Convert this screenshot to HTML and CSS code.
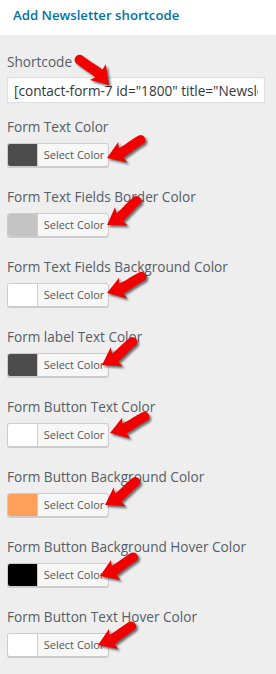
FILE: index.html
```html
<!DOCTYPE html>
<html lang="en">
<head>
    <meta charset="UTF-8">
    <title>Add Newsletter shortcode</title>
    <link rel="stylesheet" href="styles.css">
</head>
<body>
    <div class="panel-head">Add Newsletter shortcode</div>
    <div class="panel">
        <div class="field">
            <label class="label">Shortcode</label>
            <input class="text-input" type="text" value='[contact-form-7 id="1800" title="Newsletter"]' readonly>
            <svg class="arrow arrow-down" width="60" height="50" viewBox="0 0 60 50"><g transform="translate(44 40) rotate(-132) scale(1.1)"><path d="M0 0 L15 -10 L13.5 -4.5 C22 -6 30 -8.5 35 -9 A4.5 4.5 0 0 1 37 -0.5 C29 1 21 3.5 14.5 5 L16 10.5 Z"/></g></svg>
        </div>

        <div class="field">
            <label class="label">Form Text Color</label>
            <button class="color-btn"><span class="swatch" style="background:#4c4c4c"></span><span class="btn-text">Select Color</span></button>
            <svg class="arrow" width="60" height="50" viewBox="0 0 60 50"><g transform="translate(4 30) rotate(-21) scale(1.08)"><path d="M0 0 L15 -10 L13.5 -4.5 C22 -6 30 -8.5 35 -9 A4.5 4.5 0 0 1 37 -0.5 C29 1 21 3.5 14.5 5 L16 10.5 Z"/></g></svg>
        </div>

        <div class="field">
            <label class="label">Form Text Fields Border Color</label>
            <button class="color-btn"><span class="swatch" style="background:#c4c4c4"></span><span class="btn-text">Select Color</span></button>
            <svg class="arrow" width="60" height="50" viewBox="0 0 60 50"><g transform="translate(4 30) rotate(-32) scale(1.08)"><path d="M0 0 L15 -10 L13.5 -4.5 C22 -6 30 -8.5 35 -9 A4.5 4.5 0 0 1 37 -0.5 C29 1 21 3.5 14.5 5 L16 10.5 Z"/></g></svg>
        </div>

        <div class="field">
            <label class="label">Form Text Fields Background Color</label>
            <button class="color-btn"><span class="swatch" style="background:#ffffff"></span><span class="btn-text">Select Color</span></button>
            <svg class="arrow" width="60" height="50" viewBox="0 0 60 50"><g transform="translate(4 30) rotate(-18) scale(1.08)"><path d="M0 0 L15 -10 L13.5 -4.5 C22 -6 30 -8.5 35 -9 A4.5 4.5 0 0 1 37 -0.5 C29 1 21 3.5 14.5 5 L16 10.5 Z"/></g></svg>
        </div>

        <div class="field">
            <label class="label">Form label Text Color</label>
            <button class="color-btn"><span class="swatch" style="background:#4c4c4c"></span><span class="btn-text">Select Color</span></button>
            <svg class="arrow" width="60" height="50" viewBox="0 0 60 50"><g transform="translate(4 30) rotate(-30) scale(1.08)"><path d="M0 0 L15 -10 L13.5 -4.5 C22 -6 30 -8.5 35 -9 A4.5 4.5 0 0 1 37 -0.5 C29 1 21 3.5 14.5 5 L16 10.5 Z"/></g></svg>
        </div>

        <div class="field">
            <label class="label">Form Button Text Color</label>
            <button class="color-btn"><span class="swatch" style="background:#ffffff"></span><span class="btn-text">Select Color</span></button>
            <svg class="arrow" width="60" height="50" viewBox="0 0 60 50"><g transform="translate(4 30) rotate(-18) scale(1.08)"><path d="M0 0 L15 -10 L13.5 -4.5 C22 -6 30 -8.5 35 -9 A4.5 4.5 0 0 1 37 -0.5 C29 1 21 3.5 14.5 5 L16 10.5 Z"/></g></svg>
        </div>

        <div class="field">
            <label class="label">Form Button Background Color</label>
            <button class="color-btn"><span class="swatch" style="background:#ff9f5b"></span><span class="btn-text">Select Color</span></button>
            <svg class="arrow" width="60" height="50" viewBox="0 0 60 50"><g transform="translate(4 30) rotate(-30) scale(1.08)"><path d="M0 0 L15 -10 L13.5 -4.5 C22 -6 30 -8.5 35 -9 A4.5 4.5 0 0 1 37 -0.5 C29 1 21 3.5 14.5 5 L16 10.5 Z"/></g></svg>
        </div>

        <div class="field">
            <label class="label">Form Button Background Hover Color</label>
            <button class="color-btn"><span class="swatch" style="background:#000000"></span><span class="btn-text">Select Color</span></button>
            <svg class="arrow" width="60" height="50" viewBox="0 0 60 50"><g transform="translate(4 30) rotate(-22) scale(1.08)"><path d="M0 0 L15 -10 L13.5 -4.5 C22 -6 30 -8.5 35 -9 A4.5 4.5 0 0 1 37 -0.5 C29 1 21 3.5 14.5 5 L16 10.5 Z"/></g></svg>
        </div>

        <div class="field">
            <label class="label">Form Button Text Hover Color</label>
            <button class="color-btn"><span class="swatch" style="background:#ffffff"></span><span class="btn-text">Select Color</span></button>
            <svg class="arrow" width="60" height="50" viewBox="0 0 60 50"><g transform="translate(4 30) rotate(-22) scale(1.08)"><path d="M0 0 L15 -10 L13.5 -4.5 C22 -6 30 -8.5 35 -9 A4.5 4.5 0 0 1 37 -0.5 C29 1 21 3.5 14.5 5 L16 10.5 Z"/></g></svg>
        </div>
    </div>
</body>
</html>
```

FILE: styles.css
```css
* {
    margin: 0;
    padding: 0;
    box-sizing: border-box;
}

html, body {
    height: 100%;
}

body {
    font-family: 'Open Sans', 'Noto Sans', sans-serif;
    font-size: 13.6px;
    background-color: #eeeeee;
    color: #50575e;
    overflow: hidden;
}

.panel-head {
    height: 35px;
    background-color: #ffffff;
    color: #0073aa;
    font-size: 13.2px;
    font-weight: 600;
    padding: 6px 0 0 13px;
    line-height: 18px;
}

.panel {
    padding: 18px 0 0 7px;
}

.field {
    position: relative;
    height: 70px;
}

.field:first-child {
    height: 65px;
}

.label {
    display: block;
    line-height: 18px;
    margin-bottom: 7px;
    color: #555d66;
}

.field:first-child .label {
    margin-bottom: 6px;
}

.text-input {
    display: block;
    width: 258px;
    height: 26px;
    border: 1px solid #dddddd;
    background: #ffffff;
    font-family: inherit;
    font-size: 13.6px;
    color: #32373c;
    padding: 0 6px;
    outline: none;
    box-shadow: inset 0 1px 2px rgba(0, 0, 0, 0.04);
}

.color-btn {
    display: flex;
    align-items: stretch;
    width: 102px;
    height: 24px;
    border: 1px solid #cccccc;
    border-radius: 3px;
    background-color: #f7f7f7;
    box-shadow: 0 1px 0 #cccccc;
    overflow: hidden;
    font-family: inherit;
    cursor: pointer;
}

.swatch {
    width: 30px;
    border-right: 1px solid #cccccc;
}

.btn-text {
    flex: 1;
    font-size: 11px;
    line-height: 22px;
    color: #555555;
    text-align: center;
    padding-left: 2px;
}

.arrow {
    position: absolute;
    left: 96px;
    top: 10px;
    overflow: visible;
    fill: #f00000;
    filter: drop-shadow(2px 2px 1px rgba(0, 0, 0, 0.55));
}

.arrow-down {
    left: 58px;
    top: -8px;
}

.field:nth-child(3) .arrow {
    top: 7px;
}

.field:nth-child(4) .arrow {
    top: 5px;
}

.field:nth-child(5) .arrow {
    left: 91px;
    top: 7px;
}

.field:nth-child(6) .arrow {
    left: 99px;
    top: 5px;
}

.field:nth-child(7) .arrow {
    left: 94px;
    top: 7px;
}

.field:nth-child(8) .arrow {
    left: 89px;
    top: 8px;
}

.field:nth-child(9) .arrow {
    left: 87px;
    top: 7px;
}
```
